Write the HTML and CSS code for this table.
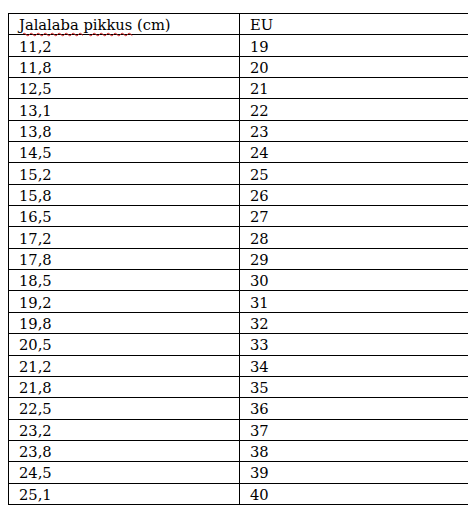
FILE: index.html
```html
<!DOCTYPE html>
<html lang="et">
<head>
<meta charset="utf-8">
<title>Jalalaba pikkus</title>
<link rel="stylesheet" href="styles.css">
</head>
<body>
<table class="size-table">
  <tbody>
    <tr><td class="col-a"><span class="spell">Jalalaba pikkus</span> (cm)</td><td class="col-b">EU</td></tr>
    <tr><td class="col-a">11,2</td><td class="col-b">19</td></tr>
    <tr><td class="col-a">11,8</td><td class="col-b">20</td></tr>
    <tr><td class="col-a">12,5</td><td class="col-b">21</td></tr>
    <tr><td class="col-a">13,1</td><td class="col-b">22</td></tr>
    <tr><td class="col-a">13,8</td><td class="col-b">23</td></tr>
    <tr><td class="col-a">14,5</td><td class="col-b">24</td></tr>
    <tr><td class="col-a">15,2</td><td class="col-b">25</td></tr>
    <tr><td class="col-a">15,8</td><td class="col-b">26</td></tr>
    <tr><td class="col-a">16,5</td><td class="col-b">27</td></tr>
    <tr><td class="col-a">17,2</td><td class="col-b">28</td></tr>
    <tr><td class="col-a">17,8</td><td class="col-b">29</td></tr>
    <tr><td class="col-a">18,5</td><td class="col-b">30</td></tr>
    <tr><td class="col-a">19,2</td><td class="col-b">31</td></tr>
    <tr><td class="col-a">19,8</td><td class="col-b">32</td></tr>
    <tr><td class="col-a">20,5</td><td class="col-b">33</td></tr>
    <tr><td class="col-a">21,2</td><td class="col-b">34</td></tr>
    <tr><td class="col-a">21,8</td><td class="col-b">35</td></tr>
    <tr><td class="col-a">22,5</td><td class="col-b">36</td></tr>
    <tr><td class="col-a">23,2</td><td class="col-b">37</td></tr>
    <tr><td class="col-a">23,8</td><td class="col-b">38</td></tr>
    <tr><td class="col-a">24,5</td><td class="col-b">39</td></tr>
    <tr><td class="col-a">25,1</td><td class="col-b">40</td></tr>
  </tbody>
</table>
</body>
</html>
```
FILE: styles.css
```css
html, body {
  margin: 0;
  padding: 0;
  background: #ffffff;
  overflow: hidden;
}

body {
  padding: 13px 0 0 8px;
  font-family: "DejaVu Serif", "Liberation Serif", serif;
  font-size: 14.7px;
  color: #000000;
}

.size-table {
  border-collapse: collapse;
  table-layout: fixed;
  width: 480px;
}

.size-table tr {
  height: 21.35px;
}

.size-table td {
  border: 1px solid #000000;
  padding: 2px 10px 0 10px;
  line-height: 18px;
  vertical-align: middle;
  white-space: nowrap;
}

.col-a {
  width: 210px;
}

.spell {
  text-decoration: underline wavy #d21f1f;
  text-decoration-thickness: 1px;
  text-underline-offset: 2px;
}
```
